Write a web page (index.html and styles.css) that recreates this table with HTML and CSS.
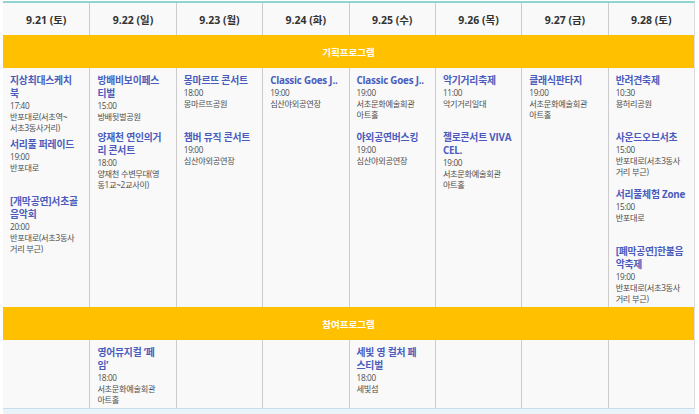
FILE: index.html
```html
<!DOCTYPE html>
<html lang="ko">
<head>
<meta charset="utf-8">
<title>축제 일정</title>
<link rel="stylesheet" href="styles.css">
</head>
<body>
<div class="schedule">
  <div class="day first">9.21 (토)</div>
  <div class="day">9.22 (일)</div>
  <div class="day">9.23 (월)</div>
  <div class="day">9.24 (화)</div>
  <div class="day">9.25 (수)</div>
  <div class="day">9.26 (목)</div>
  <div class="day">9.27 (금)</div>
  <div class="day">9.28 (토)</div>

  <div class="band">기획프로그램</div>

  <div class="cell first">
    <div class="event"><div class="title">지상최대스케치<br>북</div><div class="meta">17:40<br>반포대로(서초역~<br>서초3동사거리)</div></div>
    <div class="event"><div class="title">서리풀 퍼레이드</div><div class="meta">19:00<br>반포대로</div></div>
    <div class="event"><div class="title">[개막공연]서초골<br>음악회</div><div class="meta">20:00<br>반포대로(서초3동사<br>거리 부근)</div></div>
  </div>
  <div class="cell">
    <div class="event"><div class="title">방배비보이페스<br>티벌</div><div class="meta">15:00<br>방배뒷벌공원</div></div>
    <div class="event"><div class="title">양재천 연인의거<br>리 콘서트</div><div class="meta">18:00<br>양재천 수변무대(영<br>동1교~2교사이)</div></div>
  </div>
  <div class="cell">
    <div class="event"><div class="title">몽마르뜨 콘서트</div><div class="meta">18:00<br>몽마르뜨공원</div></div>
    <div class="event"><div class="title">챔버 뮤직 콘서트</div><div class="meta">19:00<br>심산야외공연장</div></div>
  </div>
  <div class="cell">
    <div class="event"><div class="title">Classic Goes J..</div><div class="meta">19:00<br>심산야외공연장</div></div>
  </div>
  <div class="cell">
    <div class="event"><div class="title">Classic Goes J..</div><div class="meta">19:00<br>서초문화예술회관<br>아트홀</div></div>
    <div class="event"><div class="title">야외공연버스킹</div><div class="meta">19:00<br>심산야외공연장</div></div>
  </div>
  <div class="cell">
    <div class="event"><div class="title">악기거리축제</div><div class="meta">11:00<br>악기거리일대</div></div>
    <div class="event"><div class="title">첼로콘서트 VIVA<br>CEL.</div><div class="meta">19:00<br>서초문화예술회관<br>아트홀</div></div>
  </div>
  <div class="cell">
    <div class="event"><div class="title">클래식판타지</div><div class="meta">19:00<br>서초문화예술회관<br>아트홀</div></div>
  </div>
  <div class="cell">
    <div class="event"><div class="title">반려견축제</div><div class="meta">10:30<br>용허리공원</div></div>
    <div class="event"><div class="title">사운드오브서초</div><div class="meta">15:00<br>반포대로(서초3동사<br>거리 부근)</div></div>
    <div class="event"><div class="title">서리풀체험 Zone</div><div class="meta">15:00<br>반포대로</div></div>
    <div class="event"><div class="title">[폐막공연]한불음<br>악축제</div><div class="meta">19:00<br>반포대로(서초3동사<br>거리 부근)</div></div>
  </div>

  <div class="band">참여프로그램</div>

  <div class="cell first"></div>
  <div class="cell">
    <div class="event"><div class="title">영어뮤지컬 ‘페<br>임’</div><div class="meta">18:00<br>서초문화예술회관<br>아트홀</div></div>
  </div>
  <div class="cell"></div>
  <div class="cell"></div>
  <div class="cell">
    <div class="event"><div class="title">세빛 영 컬처 페<br>스티벌</div><div class="meta">18:00<br>세빛섬</div></div>
  </div>
  <div class="cell"></div>
  <div class="cell"></div>
  <div class="cell"></div>
</div>
<div class="strip"></div>
</body>
</html>
```

FILE: styles.css
```css
* {
  box-sizing: border-box;
}

body {
  margin: 0;
  background: #ffffff;
  font-family: "Open Sans", "Noto Sans CJK KR", sans-serif;
}

.schedule {
  display: grid;
  grid-template-columns: repeat(8, 1fr);
  width: 692px;
  margin: 1px 0 0 3px;
  background: #f9f9f9;
  border-top: 2px solid #8fd3d3;
  border-right: 1px solid #dcdcdc;
}

.day {
  height: 32px;
  display: flex;
  align-items: center;
  justify-content: center;
  font-size: 10.5px;
  font-weight: 700;
  color: #333333;
  border-left: 1px solid #cccccc;
}

.band {
  grid-column: 1 / -1;
  height: 33px;
  display: flex;
  align-items: center;
  justify-content: center;
  background: #ffc000;
  color: #ffffff;
  font-size: 9.5px;
  font-weight: 700;
}

.cell {
  padding: 6px 4px 3px 7px;
  border-left: 1px solid #cccccc;
}

.first {
  border-left: 0;
}

.event {
  min-height: 52px;
  margin-bottom: 5px;
}

.event:last-child {
  margin-bottom: 0;
}

.title {
  font-size: 9.8px;
  font-weight: 700;
  line-height: 13px;
  color: #4a5bbd;
  letter-spacing: -0.2px;
}

.meta {
  font-size: 8.2px;
  line-height: 11px;
  color: #4d4d4d;
  letter-spacing: -0.3px;
}

.strip {
  width: 692px;
  height: 8px;
  margin-left: 3px;
  background: #e8f3fa;
  border-top: 1px solid #c6deec;
}
```
